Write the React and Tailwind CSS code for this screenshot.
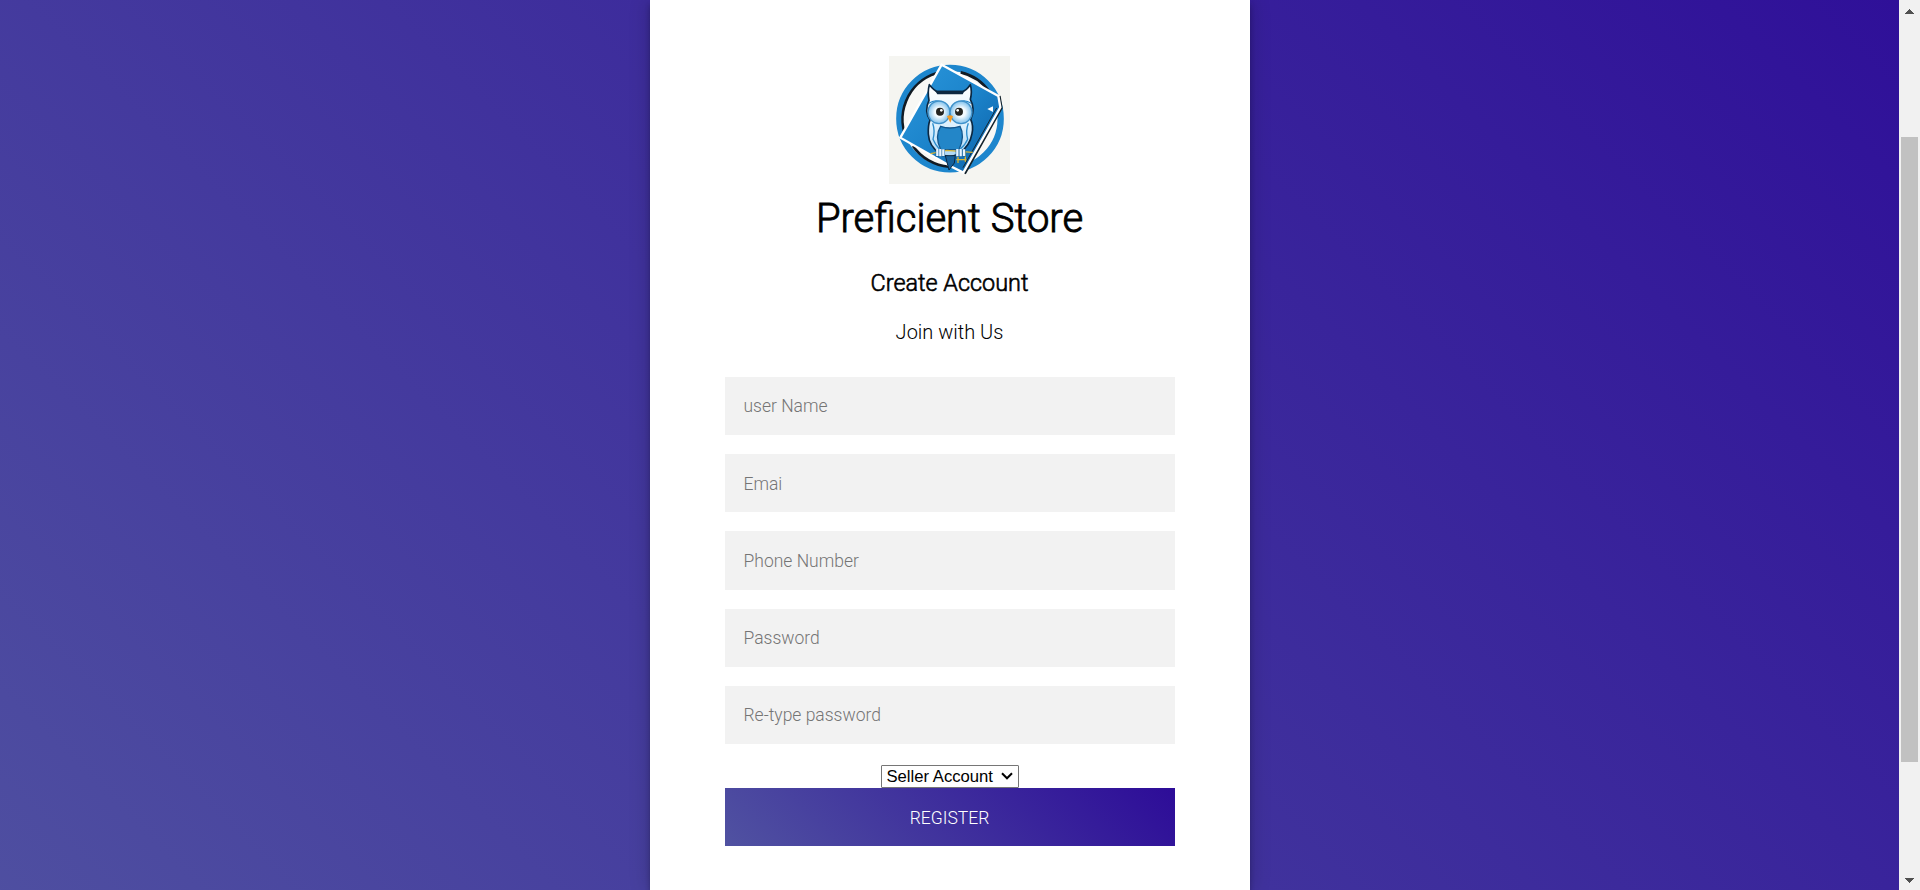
const fields = [
  { placeholder: "user Name", type: "text", pad: "" },
  { placeholder: "Emai", type: "email", pad: "pt-[1px]" },
  { placeholder: "Phone Number", type: "text", pad: "pt-[1px]" },
  { placeholder: "Password", type: "password", pad: "pt-[1px]" },
  { placeholder: "Re-type password", type: "password", pad: "" },
];

function OwlLogo() {
  return (
    <svg className="block h-[128px] w-[121px]" viewBox="0 0 363 384" aria-label="Owl logo">
      <defs>
        <linearGradient id="card" x1="0" y1="0" x2="1" y2="1">
          <stop offset="0" stopColor="#2b97dc" />
          <stop offset="0.5" stopColor="#1c84cb" />
          <stop offset="1" stopColor="#0b5fa6" />
        </linearGradient>
        <linearGradient id="body" x1="0" y1="0" x2="0" y2="1">
          <stop offset="0" stopColor="#ffffff" />
          <stop offset="0.6" stopColor="#d9effd" />
          <stop offset="1" stopColor="#a9d6f6" />
        </linearGradient>
        <radialGradient id="eye">
          <stop offset="0.4" stopColor="#f4fbff" />
          <stop offset="1" stopColor="#7fc0ec" />
        </radialGradient>
      </defs>
      <rect width="363" height="384" fill="#f5f5f1" />
      <circle cx="183" cy="188" r="152" fill="#f8f8f5" stroke="#1d86cd" strokeWidth="19" />
      <path d="M58 258 A144 144 0 0 1 142 52 M215 49 A142 142 0 0 1 302 109 M72 270 A144 144 0 0 0 180 332" fill="none" stroke="#111b24" strokeWidth="8" />
      <path d="M331 120 L337 156 L227 353" fill="none" stroke="#15232c" strokeWidth="8" />
      <path d="M158 26 L328 120 L334 154 L223 350 L185 331 L34 245 Z" fill="url(#card)" stroke="#fff" strokeWidth="7" />
      <path d="M323 156 L222 335" fill="none" stroke="#15232c" strokeWidth="3" />
      <path d="M295 159 L312 151 L312 168 Z" fill="#fff" />
      <path d="M121 86 Q135 103 145 107 H220 Q232 103 244 86 Q250 106 244 130 Q260 159 245 190 Q254 208 249 233 Q243 270 209 294 L182 304 L153 293 Q120 271 118 234 Q117 207 123 192 Q105 165 120 133 Q115 107 121 86 Z" fill="url(#body)" stroke="#0b2741" strokeWidth="5" strokeLinejoin="round" />
      <path d="M138 104 H227 L221 115 H145 Z" fill="#0b2741" />
      <path d="M155 211 Q182 221 213 211 Q229 240 210 281 H155 Q136 240 155 211 Z" fill="#2386c8" stroke="#13568c" strokeWidth="4" />
      <path d="M131 202 Q139 225 132 250 Q139 268 153 281 M238 202 Q229 225 236 250 Q229 267 213 280" fill="none" stroke="#2b8bcb" strokeWidth="4" />
      <path d="M120 142 Q152 118 184 170 Q213 118 246 142" fill="none" stroke="#2586ca" strokeWidth="4" />
      <ellipse cx="150" cy="169" rx="33" ry="34" fill="url(#eye)" stroke="#3f91ca" strokeWidth="4" />
      <ellipse cx="216" cy="169" rx="33" ry="34" fill="url(#eye)" stroke="#3f91ca" strokeWidth="4" />
      <circle cx="153" cy="167" r="12" fill="#252522" />
      <circle cx="210" cy="167" r="12" fill="#252522" />
      <circle cx="157" cy="163" r="4" fill="#fff" />
      <circle cx="206" cy="163" r="4" fill="#fff" />
      <path d="M174 181 Q183 175 192 181 L184 200 Z" fill="#f59a22" />
      <path d="M125 293 L173 283 L251 289 M207 281 V321 M229 285 V317 M202 311 H232" fill="none" stroke="#d8b536" strokeWidth="4" />
      <path d="M169 299 L180 342 L196 321 L199 299 Z" fill="#16609b" stroke="#0b2741" strokeWidth="3" />
      <path d="M145 279 V302 M154 279 V303 M163 280 V302 M205 279 V303 M215 279 V303 M225 280 V302" stroke="#17659e" strokeWidth="10" />
      <path d="M145 279 V300 M154 279 V301 M163 280 V300 M205 279 V301 M215 279 V301 M225 280 V300" stroke="#e8f5ff" strokeWidth="7" />
    </svg>
  );
}

function Scrollbar() {
  return (
    <div className="flex h-full w-[21px] shrink-0 flex-col items-center bg-[#f1f1f1]">
      <svg className="h-[137px] w-[21px] shrink-0" viewBox="0 0 21 137" shapeRendering="crispEdges">
        <path d="M6 14 L10.5 9 L15 14 Z" fill="#505050" />
      </svg>
      <div className="h-[625px] w-[17px] shrink-0 bg-[#c1c1c1]" />
      <svg className="h-[128px] w-[21px] shrink-0" viewBox="0 0 21 128" shapeRendering="crispEdges">
        <path d="M6 116 L10.5 121 L15 116 Z" fill="#505050" />
      </svg>
    </div>
  );
}

export default function App() {
  return (
    <div className="flex h-[890px] w-full overflow-hidden font-['Roboto',sans-serif] font-light text-black">
      <main className="flex flex-1 justify-center overflow-hidden bg-[linear-gradient(45deg,#5052a1,#2d0c98)] bg-[length:100%_1219px] bg-[position:0_-171px]">
        <section className="flex h-[890px] w-[600px] flex-col items-center bg-white px-[75px] pt-[56px] shadow-[0_0_20px_0_rgba(0,0,0,0.2),0_5px_5px_0_rgba(0,0,0,0.24)]">
          <OwlLogo />
          <h1 className="mt-[9px] text-[40px] leading-[52px] [-webkit-text-stroke:0.9px_black]">Preficient Store</h1>
          <h2 className="mt-[23px] text-[23.4px] leading-[30px] [-webkit-text-stroke:0.6px_black]">Create Account</h2>
          <p className="mt-[19px] text-[20px] leading-[30px]">Join with Us</p>
          <form className="mt-[30px] flex w-full flex-col items-center" onSubmit={(e) => e.preventDefault()}>
            {fields.map((f) => (
              <input
                key={f.placeholder}
                type={f.type}
                placeholder={f.placeholder}
                className={`mb-[18.9px] h-[58.3px] w-full bg-[#f2f2f2] px-[19px] text-[17.5px] outline-none placeholder:text-[#757575] ${f.pad}`}
              />
            ))}
            <div className="mt-[2px] flex h-[23px] w-[138px] items-center justify-between rounded-[1px] border border-[#767676] bg-white pr-[5px] pl-[5px] font-['Liberation_Sans',sans-serif] text-[16.67px] font-normal">
              <span>Seller Account</span>
              <svg className="h-[8px] w-[12px]" viewBox="0 0 12 8">
                <path d="M1 1.3 L6 6.3 L11 1.3" fill="none" stroke="#000" strokeWidth="2" />
              </svg>
            </div>
            <button className="h-[58px] w-full bg-[linear-gradient(45deg,#5052a1,#2d0c98)] pt-[2px] text-[17.5px] text-white">REGISTER</button>
          </form>
        </section>
      </main>
      <Scrollbar />
    </div>
  );
}
